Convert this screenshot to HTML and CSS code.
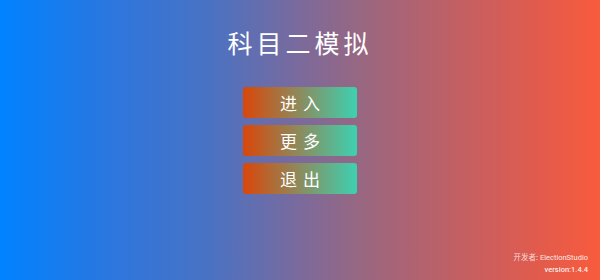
FILE: index.html
```html
<!DOCTYPE html>
<html lang="zh-CN">
<head>
  <meta charset="UTF-8" />
  <meta name="viewport" content="width=device-width, initial-scale=1.0" />
  <title>科目二模拟</title>
  <link rel="stylesheet" href="styles.css">
</head>
<body>
  <div class="screen">
    <h1 class="title">科目二模拟</h1>
    <div class="menu">
      <button class="menu-btn">进入</button>
      <button class="menu-btn">更多</button>
      <button class="menu-btn">退出</button>
    </div>
    <div class="footer">
      <div class="dev"><span class="dev-label">开发者:</span> ElectionStudio</div>
      <div class="version">version:1.4.4</div>
    </div>
  </div>
</body>
</html>
```

FILE: styles.css
```css
body {
  margin: 0;
  font-family: "Noto Sans CJK SC", "Noto Sans", sans-serif;
  color: white;
}

.screen {
  width: 600px;
  height: 280px;
  box-sizing: border-box;
  display: flex;
  flex-direction: column;
  align-items: center;
  background: linear-gradient(to right, #0082ff 0%, #2f76dc 20%, #4a72c3 35%, #7b6a9c 50%, #986781 60%, #bf6066 75%, #e25b4c 90%, #f95b3d 100%);
}

.title {
  margin: 26px 0 0;
  font-size: 25px;
  font-weight: 400;
  letter-spacing: 4px;
  line-height: 32px;
}

.menu {
  margin-top: 29px;
  display: flex;
  flex-direction: column;
  gap: 7px;
}

.menu-btn {
  width: 114px;
  height: 31px;
  border: none;
  border-radius: 3px;
  background: linear-gradient(to right, #d9470a, #3dd1b2);
  color: white;
  font-family: "Noto Sans CJK SC", sans-serif;
  font-size: 17px;
  letter-spacing: 6px;
  padding: 0 0 0 6px;
  cursor: pointer;
}

.footer {
  margin-top: auto;
  align-self: flex-end;
  padding: 0 12px 4px 0;
  text-align: right;
  font-family: Roboto, "Noto Sans CJK SC", sans-serif;
  font-size: 7.5px;
  line-height: 12px;
  color: rgba(255, 255, 255, 0.9);
}

.dev-label {
  font-family: "Noto Sans CJK SC", sans-serif;
  opacity: 0.85;
}

.version {
  font-weight: 500;
}
```
